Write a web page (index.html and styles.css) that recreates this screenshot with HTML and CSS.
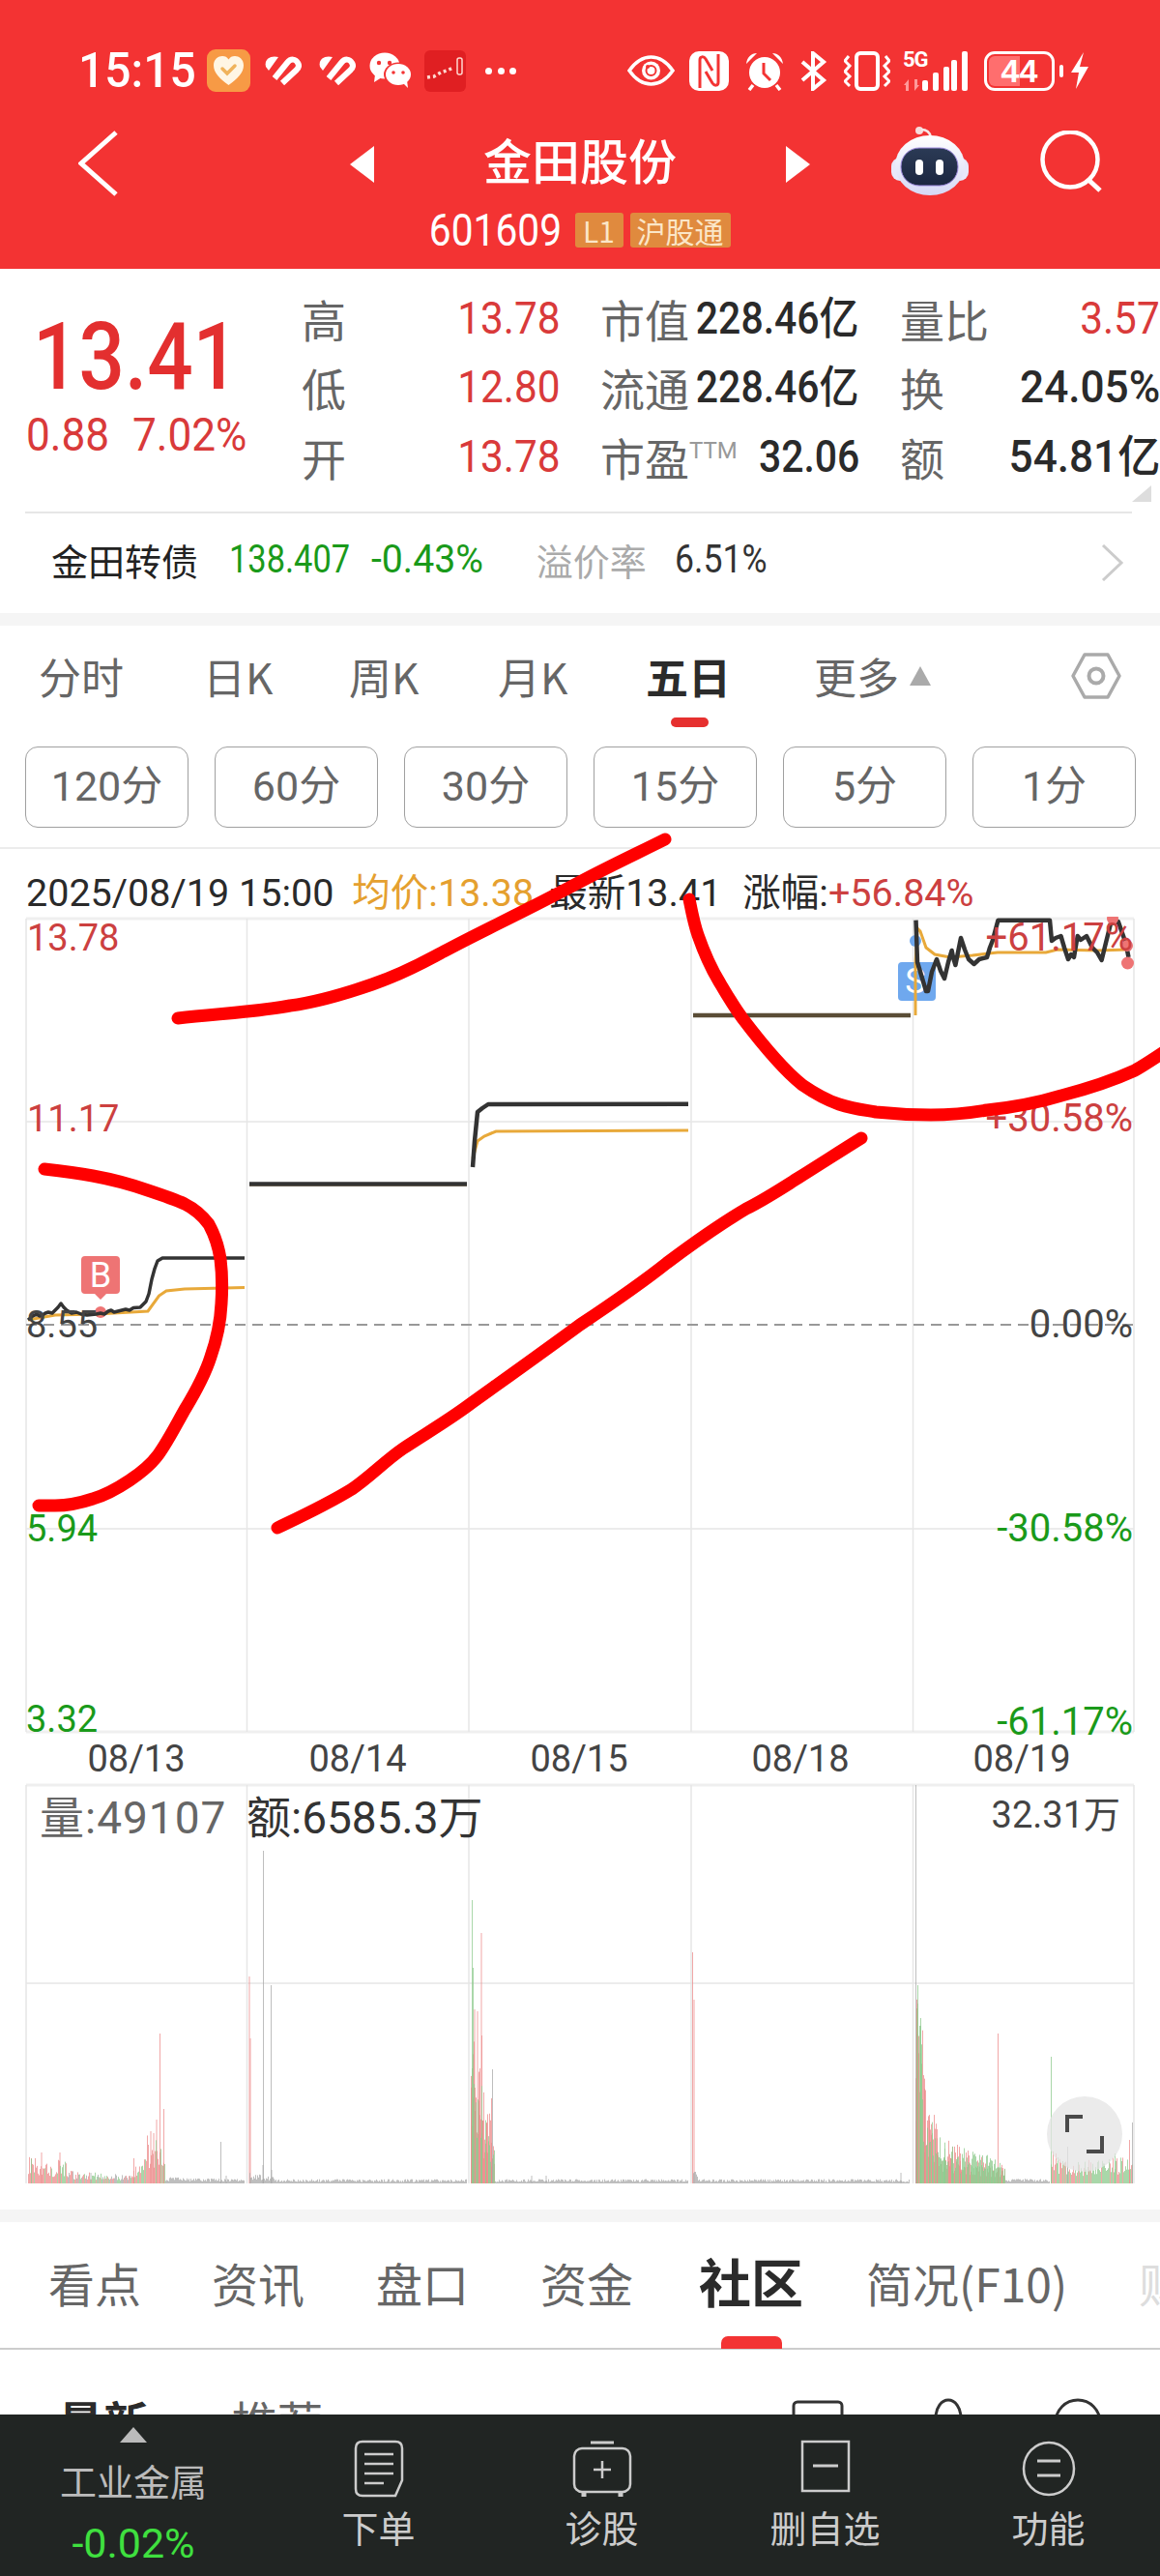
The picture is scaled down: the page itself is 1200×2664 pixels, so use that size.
FILE: index.html
```html
<!DOCTYPE html>
<html lang="zh-CN">
<head>
<meta charset="UTF-8">
<title>金田股份 601609</title>
<link rel="stylesheet" href="styles.css">
</head>
<body>
<div class="page">

  <header class="top">
    <div class="status">
      <span class="clock">15:15</span>
      <svg class="st st-app" viewBox="0 0 45 44"><rect width="45" height="44" rx="9" fill="#f79a45"/><path d="M22.5 37C13 30 7 24 7 16.500C7 10 12 7 16 7C19 7 21 8 22.500 10.500C24 8 26 7 29 7C33 7 38 10 38 16.500C38 24 32 30 22.500 37Z" fill="#fff6e4"/><path d="M16 20l5 5 8-8" fill="none" stroke="#f0b35a" stroke-width="3.500" stroke-linecap="round"/></svg>
      <svg class="st st-heart" viewBox="0 0 38 32"><path d="M1 12C-1 4 6 0 14 2L4 16Z" fill="#fff"/><path d="M10 24L23 8C27 3 32 4 34 8C36 11 35 13 33 15L18 29" fill="none" stroke="#fff" stroke-width="6"/></svg>
      <svg class="st st-heart st-heart2" viewBox="0 0 38 32"><path d="M1 12C-1 4 6 0 14 2L4 16Z" fill="#fff"/><path d="M10 24L23 8C27 3 32 4 34 8C36 11 35 13 33 15L18 29" fill="none" stroke="#fff" stroke-width="6"/></svg>
      <svg class="st st-chat" viewBox="0 0 44 38"><ellipse cx="16" cy="14" rx="15.500" ry="13.500" fill="#fff"/><path d="M6 23l-1 8 8-5Z" fill="#fff"/><circle cx="10" cy="11" r="2.200" fill="#f33333"/><circle cx="21" cy="11" r="2.200" fill="#f33333"/><ellipse cx="30" cy="23" rx="15" ry="12.500" fill="#f33333"/><ellipse cx="30" cy="23" rx="13" ry="11" fill="#fff"/><path d="M35 32l5 5-1-8Z" fill="#fff"/><circle cx="25" cy="21" r="1.800" fill="#f33333"/><circle cx="35" cy="21" r="1.800" fill="#f33333"/></svg>
      <svg class="st st-redapp" viewBox="0 0 43 43"><rect width="43" height="43" rx="6" fill="#e01f22"/><path d="M3 28l7-1 7-4 6-2 7-3" fill="none" stroke="#ffd9d0" stroke-width="3.500" stroke-dasharray="3 3"/><rect x="34" y="8" width="5" height="17" rx="2" fill="none" stroke="#ffd9d0" stroke-width="1.500"/></svg>
      <span class="st-dots"><i></i><i></i><i></i></span>
      <span class="status-gap"></span>
      <svg class="st st-eye" viewBox="0 0 49 32"><path d="M2 16C9 6 16 2 24.500 2S40 6 47 16C40 26 33 30 24.500 30S9 26 2 16Z" fill="none" stroke="#fff" stroke-width="3.500"/><circle cx="24.500" cy="16" r="9.500" fill="#fff"/><circle cx="24.500" cy="16" r="5" fill="none" stroke="#f33333" stroke-width="2"/><circle cx="21" cy="12" r="2" fill="#f33333"/></svg>
      <svg class="st st-nfc" viewBox="0 0 41 41"><rect width="41" height="41" rx="10" fill="#fff"/><path d="M11 38V9C11 5 15 5 17 8L24 20M30 3V32C30 36 26 36 24 33L17 21" fill="none" stroke="#f33333" stroke-width="3"/></svg>
      <svg class="st st-alarm" viewBox="0 0 40 41"><circle cx="20" cy="22" r="16" fill="#fff"/><path d="M1 13C2 6 6 2 12 2ZM39 13C38 6 34 2 28 2Z" fill="#fff"/><path d="M8 35l-4 5M32 35l4 5" stroke="#fff" stroke-width="3.500"/><path d="M19 12v11l7 7" fill="none" stroke="#f33333" stroke-width="3"/></svg>
      <svg class="st st-bt" viewBox="0 0 30 41"><path d="M3 11L25 30 14 39V2L25 11 3 30" fill="none" stroke="#fff" stroke-width="4"/></svg>
      <svg class="st st-vib" viewBox="0 0 48 41"><rect x="13" y="2" width="22" height="37" rx="4" fill="none" stroke="#fff" stroke-width="4"/><path d="M5 5L1 10 6 15 1 21 6 26 1 31 6 36M43 5L47 10 42 15 47 21 42 26 47 31 42 36" fill="none" stroke="#fff" stroke-width="3"/></svg>
      <span class="st-net">
        <span class="st-5g">5G</span>
        <svg class="st-arrows" viewBox="0 0 16 12"><path d="M5 0v12H2V6H0ZM11 12V0h3v6h2Z" fill="#ff9a9a"/></svg>
        <svg class="st-bars" viewBox="0 0 47 41"><rect y="30" width="6" height="11" rx="2"/><rect x="11" y="22" width="6" height="19" rx="2"/><rect x="22" y="16" width="6" height="25" rx="2"/><rect x="30" y="9" width="6" height="32" rx="2"/><rect x="41" y="0" width="6" height="41" rx="2"/></svg>
      </span>
      <span class="battery"><span class="battery-fill"></span><span class="battery-num">44</span></span>
      <span class="battery-nub"></span>
      <svg class="st st-bolt" viewBox="0 0 20 38"><path d="M14 0L1 21H9L6 38 19 15H10Z" fill="#fff"/></svg>
    </div>

    <div class="titlebar">
      <svg class="back" viewBox="0 0 42 70"><path d="M39 3L3 35 39 67" fill="none" stroke="#fff" stroke-width="5"/></svg>
      <span class="tri tri-left"></span>
      <div class="title">
        <div class="title-name">金田股份</div>
        <div class="title-code">
          <span class="code">601609</span>
          <span class="tag">L1</span>
          <span class="tag">沪股通</span>
        </div>
      </div>
      <span class="tri tri-right"></span>
      <svg class="robot" viewBox="0 0 80 72">
        <defs>
          <linearGradient id="shell" x1="0" y1="0" x2="0" y2="1"><stop offset="0" stop-color="#fff"/><stop offset="1" stop-color="#d6d8f5"/></linearGradient>
          <linearGradient id="face" x1="0" y1="0" x2="0" y2="1"><stop offset="0" stop-color="#2b3a55"/><stop offset="1" stop-color="#1c2740"/></linearGradient>
        </defs>
        <circle cx="29" cy="4" r="4" fill="#f6dcdc"/>
        <path d="M31 3C37 3 40 6 41 11" fill="none" stroke="#f8e8e8" stroke-width="2.500"/>
        <rect x="0" y="32" width="80" height="24" rx="9" fill="#e8e8fa"/>
        <ellipse cx="40" cy="40" rx="36" ry="31" fill="url(#shell)"/>
        <rect x="10" y="22" width="59" height="39" rx="19" fill="url(#face)" stroke="#9f8be0" stroke-width="1"/>
        <rect x="25" y="34" width="8" height="16" rx="4" fill="#fff"/>
        <rect x="46" y="34" width="8" height="16" rx="4" fill="#fff"/>
      </svg>
      <svg class="search" viewBox="0 0 66 66"><circle cx="32" cy="30" r="28.500" fill="none" stroke="#fff" stroke-width="4.500"/><path d="M50 50L63 62" stroke="#fff" stroke-width="5"/></svg>
    </div>
  </header>

  <section class="quote">
    <div class="quote-main">
      <div class="price">13.41</div>
      <div class="change"><span>0.88</span><span>7.02%</span></div>
    </div>
    <div class="quote-grid">
      <div class="cell"><span class="lab">高</span><span class="val red">13.78</span></div>
      <div class="cell cell-b"><span class="lab">市值</span><span class="val">228.46亿</span></div>
      <div class="cell cell-c"><span class="lab">量比</span><span class="val red">3.57</span></div>
      <div class="cell"><span class="lab">低</span><span class="val red">12.80</span></div>
      <div class="cell cell-b"><span class="lab">流通</span><span class="val">228.46亿</span></div>
      <div class="cell cell-c"><span class="lab">换</span><span class="val wide">24.05%</span></div>
      <div class="cell"><span class="lab">开</span><span class="val red">13.78</span></div>
      <div class="cell cell-b"><span class="lab">市盈<sup class="ttm">TTM</sup></span><span class="val">32.06</span></div>
      <div class="cell cell-c"><span class="lab">额</span><span class="val wide">54.81亿</span></div>
    </div>
    <span class="corner"></span>
    <div class="bond">
      <span class="bond-name">金田转债</span>
      <span class="bond-num green">138.407</span>
      <span class="bond-num green bond-pct">-0.43%</span>
      <span class="bond-lab">溢价率</span>
      <span class="bond-num bond-rate">6.51%</span>
      <svg class="bond-arrow" viewBox="0 0 24 38"><path d="M2 1L21 19 2 37" fill="none" stroke="#ccc" stroke-width="3"/></svg>
    </div>
  </section>

  <div class="band"></div>

  <nav class="periods">
    <span class="per per-1">分时</span>
    <span class="per per-2">日K</span>
    <span class="per per-3">周K</span>
    <span class="per per-4">月K</span>
    <span class="per per-5 on">五日</span>
    <span class="per per-6">更多<i class="up"></i></span>
    <svg class="hex" viewBox="0 0 52 48"><path d="M14 2H38L50 24 38 46H14L2 24Z" fill="none" stroke="#aaa" stroke-width="3.500" stroke-linejoin="round"/><circle cx="26" cy="24" r="7.500" fill="none" stroke="#aaa" stroke-width="4"/></svg>
  </nav>

  <div class="mins">
    <span class="min">120分</span>
    <span class="min">60分</span>
    <span class="min">30分</span>
    <span class="min">15分</span>
    <span class="min">5分</span>
    <span class="min">1分</span>
  </div>

  <div class="info">
    <span class="info-time">2025/08/19 15:00</span>
    <span class="info-avg">均价:13.38</span>
    <span class="info-last">最新13.41</span>
    <span class="info-rise">涨幅:<b>+56.84%</b></span>
  </div>

  <svg class="chart" viewBox="0 948 1200 1337" id="chart">
    <g class="grid">
      <path class="edge" d="M27 950H1173M27 1791H1173M27 1846H1173"/>
      <path d="M27 950V1791M255.500 950V1791M485 950V1791M715 950V1791M944.500 950V1791M1173 950V1791"/>
      <path d="M27 1160H1173M27 1581H1173"/>
      <path d="M27 1846V2258M255.500 1846V2258M485 1846V2258M715 1846V2258M944.500 1846V2258M1173 1846V2258"/>
      <path class="mid" d="M27 2051H1173"/>
    </g>
    <path class="zero" d="M27 1370H1173"/>

    <g id="vol"></g>

    <!-- B / S markers sit below the price lines -->
    <path class="mark-b" d="M88 1299H120Q124 1299 124 1303V1334Q124 1338 120 1338H110L104 1344 98 1338H88Q84 1338 84 1334V1303Q84 1299 88 1299Z"/>
    <text class="mark-t" x="104" y="1331">B</text>
    <circle class="mark-b" cx="104" cy="1357" r="6"/>
    <circle class="mark-s" cx="947" cy="973" r="6"/>
    <rect class="mark-s" x="929" y="995" width="39" height="40" rx="4"/>
    <text class="mark-t" x="947" y="1027">S</text>

    <polyline class="avg" points="29,1365 57,1360 99.500,1359 153,1356 164.500,1340 172,1335 191,1333 253,1331.500"/>
    <polyline class="px thin" points="29,1365 34,1361 38,1359 41,1361 44,1360 47,1358 50,1357 54,1358 57,1355 60,1352 63,1348 66,1352 69,1355 74,1358 79,1357 84,1359 90,1360 99.500,1359 104,1358 108,1359 112,1356 115,1355 118,1357 122,1356 126,1355 130,1354 134,1355 138,1352.500 145,1352 151,1346 154,1338 157,1323 160,1312 163,1304 168,1301 253,1301"/>
    <polyline class="avg" points="258,1225 483,1225"/>
    <polyline class="px" points="258,1224.500 483,1224.500"/>
    <polyline class="avg" points="489,1198 494,1180 501,1175 513,1170 712,1169"/>
    <polyline class="px" points="489,1207 491,1180 494,1150 499,1146 505,1142 712,1141.700"/>
    <polyline class="avg" points="717,1050.500 942,1050.500"/>
    <polyline class="px flat" points="717,1050 942,1050"/>
    <polyline class="avg" points="947,1050 947,997 949,960 952,963 958,980 967,987 983,990 1006,988 1032,985 1082,985 1094,982 1136,983 1166,982"/>
    <polyline class="px" points="947.500,951.700 949,995 958,1025 960,1025 964,1005 969,992 973,1004 977,1012 981,995 984.600,983 986,990 988.400,998 991,985 994,970 998,982 1002,992 1007.600,997 1013,992 1021,990 1024,980 1026.700,973 1032.500,951.700 1086,951.700 1088,973 1092,970 1097.500,968 1101,980 1105,992 1108,987 1111,990 1114.700,968 1118,972 1124,968 1130,980 1135,985 1139.600,993 1144,975 1149,955 1156.800,953 1161,965 1164.500,975 1167.500,990"/>
    <circle class="mark-b" cx="1151" cy="950" r="6"/>
    <circle class="mark-b" cx="1166" cy="978" r="6"/>
    <circle class="mark-b" cx="1166.500" cy="996" r="6.500"/>

    <text class="ax red" x="28" y="983">13.78</text>
    <text class="ax red" x="28" y="1170">11.17</text>
    <text class="ax gray" x="27" y="1383">8.55</text>
    <text class="ax green" x="27" y="1594">5.94</text>
    <text class="ax green" x="27" y="1791">3.32</text>
    <text class="ax pct red end" x="1172" y="983">+61.17%</text>
    <text class="ax pct red end" x="1172" y="1170">+30.58%</text>
    <text class="ax pct gray end" x="1172" y="1383">0.00%</text>
    <text class="ax pct green end" x="1172" y="1594">-30.58%</text>
    <text class="ax pct green end" x="1172" y="1794">-61.17%</text>

    <text class="ax gray mid-t" x="141" y="1832">08/13</text>
    <text class="ax gray mid-t" x="370" y="1832">08/14</text>
    <text class="ax gray mid-t" x="599" y="1832">08/15</text>
    <text class="ax gray mid-t" x="828" y="1832">08/18</text>
    <text class="ax gray mid-t" x="1057" y="1832">08/19</text>

    <text class="vt" x="41" y="1896">量:49107</text>
    <text class="vt dark" x="255" y="1896">额:6585.3万</text>
    <text class="ax gray end" x="1159" y="1890">32.31万</text>

    <circle class="fs-bg" cx="1122" cy="2207" r="39"/>
    <path class="fs" d="M1104 2205V2189H1120M1140 2209V2225H1124"/>
  </svg>

  <div class="band band-2"></div>

  <nav class="subnav">
    <span class="sub sub-1">看点</span>
    <span class="sub sub-2">资讯</span>
    <span class="sub sub-3">盘口</span>
    <span class="sub sub-4">资金</span>
    <span class="sub sub-5 on">社区</span>
    <span class="sub sub-6">简况(F10)</span>
    <span class="sub sub-7">财</span>
  </nav>

  <div class="feed">
    <span class="feed-on">最新</span>
    <span class="feed-off">推荐</span>
    <svg class="feed-ic feed-ic-1" viewBox="0 0 54 40"><rect x="2" y="2" width="50" height="38" rx="4" fill="none" stroke="#333" stroke-width="3"/></svg>
    <svg class="feed-ic feed-ic-2" viewBox="0 0 30 40"><ellipse cx="15" cy="20" rx="13" ry="18" fill="none" stroke="#333" stroke-width="3"/></svg>
    <svg class="feed-ic feed-ic-3" viewBox="0 0 50 40"><circle cx="25" cy="25" r="23" fill="none" stroke="#333" stroke-width="3"/></svg>
  </div>

  <footer class="foot">
    <div class="foot-idx">
      <i class="foot-tri"></i>
      <span class="foot-name">工业金属</span>
      <span class="foot-pct">-0.02%</span>
    </div>
    <div class="foot-btn">
      <svg viewBox="0 0 52 60"><path d="M9 2H43Q50 2 50 9V42L43 58H9Q2 58 2 51V9Q2 2 9 2Z" fill="none" stroke="#ccc" stroke-width="2.500"/><path d="M11 15H41M11 25H41M11 35H41M11 45H31" stroke="#ccc" stroke-width="2.500"/></svg>
      <span>下单</span>
    </div>
    <div class="foot-btn">
      <svg viewBox="0 0 62 60"><path d="M19 3H43" stroke="#ccc" stroke-width="3"/><rect x="2" y="9" width="58" height="45" rx="8" fill="none" stroke="#ccc" stroke-width="2.500"/><path d="M31 22V40M22 31H40" stroke="#ccc" stroke-width="2.500"/><path d="M12 55V59M50 55V59" stroke="#ccc" stroke-width="5"/></svg>
      <span>诊股</span>
    </div>
    <div class="foot-btn">
      <svg viewBox="0 0 52 60"><rect x="2" y="2" width="48" height="51" fill="none" stroke="#ccc" stroke-width="2.500"/><path d="M13 27H39" stroke="#ccc" stroke-width="3"/></svg>
      <span>删自选</span>
    </div>
    <div class="foot-btn">
      <svg viewBox="0 0 56 60"><ellipse cx="28" cy="30" rx="26" ry="27" fill="none" stroke="#ccc" stroke-width="2.500"/><path d="M16 22H40M16 37H40" stroke="#ccc" stroke-width="3"/></svg>
      <span>功能</span>
    </div>
  </footer>

  <!-- hand drawn marks on top of the screenshot -->
  <svg class="ink" viewBox="0 0 1200 2664">
    <path d="M184 1053C230 1048 268 1046 300 1040C330 1036 356 1028 385 1018C420 1006 440 994 459 984C500 962 540 944 600 912C630 896 660 882 688 868"/>
    <path d="M713 930C716 945 718 956 722 967C730 990 737 1004 745 1017C752 1029 760 1042 768 1053C790 1082 810 1106 830 1122C846 1133 856 1138 868 1142C884 1147 895 1148 906 1150C925 1152 945 1153 963 1153C985 1153 1003 1151 1021 1148C1050 1145 1075 1140 1098 1133C1125 1126 1150 1118 1174 1107C1183 1102 1192 1096 1204 1088"/>
    <path d="M46 1209C64 1211 80 1213 96 1216C118 1220 136 1225 153 1231C168 1236 180 1240 191 1245C203 1251 210 1258 216 1266C222 1277 226 1289 228 1302C230 1318 230 1333 229 1348C228 1368 224 1386 218 1403C212 1422 202 1440 191 1458C182 1474 174 1490 164 1504C156 1515 146 1523 134 1531C122 1539 110 1546 96 1550C84 1554 70 1557 57 1557L40 1557"/>
    <path d="M287 1580C312 1568 338 1556 364 1540C382 1528 398 1511 417 1498C438 1484 462 1470 485 1453C524 1425 562 1398 600 1370C630 1350 660 1330 690 1306C718 1285 745 1266 772 1250C792 1240 810 1228 826 1218C850 1203 870 1190 891 1177"/>
  </svg>
</div>
<script src="script.js"></script>
</body>
</html>
```
FILE: styles.css
```css
* { box-sizing: border-box; }
html, body { margin: 0; padding: 0; background: #fff; }
body { font-family: "Noto Sans CJK SC", Roboto, sans-serif; color: #222; }
.page { position: relative; width: 1200px; height: 2664px; overflow: hidden; }
.red { color: #d93a3a; fill: #cc4040; }
.green { color: #1a9a1a; fill: #1a9a1a; }
.gray { fill: #444; }

/* header */
.top { height: 278px; padding-top: 51px; background: #f33333; color: #fff; }
.status { display: flex; align-items: center; height: 44px; padding-left: 81px; }
.clock { width: 133px; flex: none; font: 500 50px/44px Roboto, sans-serif; transform: scaleX(0.96); transform-origin: left center; }
.st { display: block; flex: none; }
.st-app { width: 45px; height: 44px; }
.st-heart { width: 38px; height: 32px; margin-left: 15px; }
.st-heart2 { margin-left: 18px; }
.st-chat { width: 44px; height: 38px; margin-left: 14px; }
.st-redapp { width: 43px; height: 43px; margin-left: 13px; }
.st-dots { display: flex; gap: 5.500px; margin-left: 20px; }
.st-dots i { width: 7px; height: 7px; border-radius: 50%; background: #fff; }
.status-gap { width: 115px; flex: none; }
.st-eye { width: 49px; height: 32px; }
.st-nfc { width: 41px; height: 41px; margin-left: 15px; }
.st-alarm { width: 40px; height: 41px; margin-left: 17px; }
.st-bt { width: 30px; height: 41px; margin-left: 16px; }
.st-vib { width: 48px; height: 41px; margin-left: 16px; }
.st-net { position: relative; width: 67px; height: 41px; margin-left: 13px; flex: none; }
.st-5g { position: absolute; left: 0; top: -3px; font: 700 22px/24px Roboto, sans-serif; letter-spacing: -1px; }
.st-arrows { position: absolute; left: 1px; top: 29px; width: 16px; height: 12px; }
.st-bars { position: absolute; left: 20px; top: 0; width: 47px; height: 41px; fill: #fff; }
.battery { position: relative; width: 73px; height: 41px; margin-left: 17px; border: 3.500px solid #fff; border-radius: 11px; flex: none; overflow: hidden; }
.battery-fill { position: absolute; left: 2px; top: 2px; bottom: 2px; width: 32px; background: #ff6e6e; border-radius: 6px 0 0 6px; }
.battery-num { position: absolute; left: 0; right: 0; top: 0; text-align: center; font: 700 34px/34px "Liberation Sans", sans-serif; color: #fff; }
.battery-nub { width: 4px; height: 13px; margin-left: 5px; background: #fff; border-radius: 2px; flex: none; }
.st-bolt { width: 20px; height: 38px; margin-left: 7px; }

.titlebar { position: relative; height: 115px; margin-top: 68px; }
.back { position: absolute; left: 81px; top: 0; width: 42px; height: 70px; }
.tri { position: absolute; top: 17px; width: 0; height: 0; border-top: 19px solid transparent; border-bottom: 19px solid transparent; }
.tri-left { left: 362px; border-right: 25px solid #fff; }
.tri-right { left: 813px; border-left: 25px solid #fff; }
.title { width: 1200px; margin-top: -29px; text-align: center; }
.title-name { font-size: 50px; line-height: 60px; font-weight: 500; }
.title-code { display: flex; align-items: center; justify-content: center; gap: 7px; margin-top: 24px; }
.code { margin-left: -18px; margin-right: 6px; font: 400 46px/40px Roboto, sans-serif; transform: scaleX(0.885); transform-origin: right center; }
.tag { min-width: 50px; height: 36px; padding: 0 7px; background: #e08a3e; color: #fbe6c8; font-size: 30px; line-height: 36px; text-align: center; border-radius: 3px; }
.robot { position: absolute; left: 922px; top: -3px; width: 80px; height: 72px; }
.search { position: absolute; left: 1075px; top: 1px; width: 66px; height: 66px; }

/* quote */
.quote { position: relative; height: 356px; }
.quote-main { position: absolute; left: 27px; top: 37px; width: 285px; }
.price { padding-left: 7px; font: 500 96px/108px Roboto, sans-serif; color: #e32f2f; transform: scaleX(0.87); transform-origin: 7px center; }
.change { display: flex; gap: 16px; margin-top: 2px; font: 400 48px/50px Roboto, sans-serif; color: #d93a3a; }
.change span { transform: scaleX(0.92); transform-origin: left center; }
.quote-grid { position: absolute; left: 312px; top: 15px; width: 888px; display: grid; grid-template-columns: 268px 309px 311px; grid-auto-rows: 71.500px; }
.cell { display: flex; justify-content: space-between; align-items: center; white-space: nowrap; }
.cell-b { padding-left: 41px; }
.cell-c { padding-left: 42px; }
.lab { font-size: 46px; color: #666; }
.val { margin-left: -40px; font: 500 46px/60px Roboto, "Noto Sans CJK SC", sans-serif; color: #2a2a2a; transform: scaleX(0.89); transform-origin: right center; }
.val.wide { transform: scaleX(0.96); }
.val.red { font-weight: 400; color: #d93a3a; transform: scaleX(0.92); }
.ttm { font: 400 24px/24px Roboto, sans-serif; color: #999; vertical-align: 18px; }
.corner { position: absolute; right: 9px; top: 224px; width: 0; height: 0; border-left: 20px solid transparent; border-bottom: 17px solid #ddd; }
.bond { position: absolute; left: 26px; right: 29px; top: 251px; height: 105px; border-top: 2px solid #e6e6e6; display: flex; align-items: center; padding: 0 0 8px 27px; white-space: nowrap; }
.bond-name { width: 184px; flex: none; font-size: 38px; color: #222; }
.bond-num { font: 400 40px/50px Roboto, sans-serif; transform: scaleX(0.86); transform-origin: left center; }
.bond-pct { margin-left: 2px; transform: scaleX(0.98); }
.bond-lab { margin-left: 52px; font-size: 38px; color: #aaa; }
.bond-rate { margin-left: 29px; color: #333; transform: scaleX(0.89); }
.bond-arrow { position: absolute; left: 1113px; top: 32px; width: 24px; height: 38px; }

.band { height: 13px; background: #f5f5f5; }

/* period tabs */
.periods { position: relative; height: 107px; }
.per { position: absolute; top: 21px; font-size: 44px; line-height: 62px; color: #666; white-space: nowrap; }
.per-1 { left: 40px; }
.per-2 { left: 210px; }
.per-3 { left: 361px; }
.per-4 { left: 515px; }
.per-5 { left: 668px; }
.per-6 { left: 842px; }
.per.on { color: #2b2b2b; font-weight: 700; }
.per.on::after { content: ""; position: absolute; left: 26px; top: 74px; width: 39px; height: 10px; border-radius: 5px; background: #e6302f; }
.up { display: inline-block; width: 0; height: 0; margin-left: 11px; vertical-align: 9px; border-left: 11px solid transparent; border-right: 11px solid transparent; border-bottom: 20px solid #aaa; }
.hex { position: absolute; left: 1108px; top: 28px; width: 52px; height: 48px; }

.mins { display: flex; gap: 27px; padding: 18px 24px 20px 26px; border-bottom: 2px solid #ececec; }
.min { width: 169px; height: 84px; border: 1.500px solid #a0a0a0; border-radius: 13px; font: 400 43px/80px Roboto, "Noto Sans CJK SC", sans-serif; color: #666; text-align: center; }

.info { display: flex; height: 70px; padding: 16px 0 0 27px; font: 400 39.500px/60px Roboto, "Noto Sans CJK SC", sans-serif; color: #2a2a2a; white-space: nowrap; }
.info-avg { margin-left: 19px; color: #e5a02f; }
.info-last { margin-left: 16px; }
.info-rise { margin-left: 22px; }
.info-rise b { font-weight: 400; color: #cc4040; }

/* chart */
.chart { display: block; width: 1200px; height: 1337px; }
.grid path { fill: none; stroke: #e6e6e6; stroke-width: 1.500; }
.grid .edge { stroke: #efefef; stroke-width: 3; }
.zero { fill: none; stroke: #999; stroke-width: 2; stroke-dasharray: 11 7; }
.avg { fill: none; stroke: #e8a93a; stroke-width: 3; }
.px { fill: none; stroke: #333; stroke-width: 4.500; stroke-linejoin: round; }
.px.thin { stroke-width: 3.500; }
.flat { stroke: #5a4d36; }
.mark-b { fill: #ee7474; }
.mark-s { fill: #6fa8ee; }
.mark-t { fill: #fff; font: 400 36px Roboto, sans-serif; text-anchor: middle; }
.ax { font: 400 38px Roboto, "Noto Sans CJK SC", sans-serif; }
.pct { font-size: 40px; }
.end { text-anchor: end; }
.mid-t { text-anchor: middle; }
.vt { font: 400 46px Roboto, "Noto Sans CJK SC", sans-serif; fill: #666; letter-spacing: 1px; }
.vt.dark { fill: #333; letter-spacing: 0; }
.fs-bg { fill: #e4e4e4; fill-opacity: 0.75; }
.fs { fill: none; stroke: #4a4a4a; stroke-width: 4; }

/* lower tabs */
.subnav { position: relative; height: 132px; border-bottom: 2px solid #ccc; }
.sub { position: absolute; top: 27px; font-size: 48px; line-height: 70px; color: #666; white-space: nowrap; }
.sub-1 { left: 50px; }
.sub-2 { left: 219px; }
.sub-3 { left: 389px; }
.sub-4 { left: 559px; }
.sub-5 { left: 723px; top: 26px; font-size: 54px; font-weight: 700; color: #2b2b2b; }
.sub-5::after { content: ""; position: absolute; left: 23px; top: 92px; width: 63px; height: 13px; border-radius: 7px 7px 0 0; background: #f33333; }
.sub-6 { left: 896px; }
.sub-7 { left: 1178px; color: #ddd; }

.feed { position: relative; height: 67px; overflow: hidden; }
.feed-on { position: absolute; left: 60px; top: 43px; font-size: 47px; line-height: 60px; font-weight: 700; color: #2b2b2b; }
.feed-off { position: absolute; left: 240px; top: 43px; font-size: 47px; line-height: 60px; color: #666; }
.feed-ic { position: absolute; top: 52px; }
.feed-ic-1 { left: 819px; width: 54px; height: 40px; }
.feed-ic-2 { left: 966px; top: 50px; width: 30px; height: 40px; }
.feed-ic-3 { left: 1090px; top: 50px; width: 50px; height: 40px; }

/* footer */
.foot { display: grid; grid-template-columns: 276px repeat(4, 231px); height: 167px; background: #212523; }
.foot-idx { position: relative; text-align: center; }
.foot-tri { display: block; width: 0; height: 0; margin: 13px auto 0; border-left: 14.500px solid transparent; border-right: 14.500px solid transparent; border-bottom: 16px solid #bbb; }
.foot-name { display: block; margin-top: 12px; font-size: 38px; line-height: 54px; color: #bbb; }
.foot-pct { display: block; margin-top: 13px; font: 400 43px/50px Roboto, sans-serif; color: #3fe03f; }
.foot-btn { text-align: center; padding-top: 26px; color: #ccc; font-size: 38px; line-height: 56px; }
.foot-btn svg { display: block; height: 60px; margin: 0 auto 2px; }

.ink { position: absolute; left: 0; top: 0; width: 1200px; height: 2664px; pointer-events: none; }
.ink path { fill: none; stroke: #ff0000; stroke-width: 13; stroke-linecap: round; stroke-linejoin: round; }
```
FILE: script.js
```js
// volume bars, far too many to write by hand
var vol = document.getElementById('vol');
var BASE = 2258;
var RED = '#ec8a8a', GREEN = '#8cc98c', GREY = '#a8a8a8';
var seed = 17;

function rnd() {
  seed = (seed * 16807) % 2147483647;
  return seed / 2147483647;
}

var d = {};
function bar(x, top, color) {
  d[color] = (d[color] || '') + 'M' + x + ' ' + BASE + 'V' + top;
}

// a run of bars, height falls from h0 to h1 across the run
function run(x0, x1, h0, h1, colors) {
  for (var x = x0; x < x1; x++) {
    var t = (x - x0) / (x1 - x0);
    var h = (h0 + (h1 - h0) * t) * (0.35 + rnd() * 0.75);
    bar(x + 0.5, BASE - h, colors[Math.floor(rnd() * colors.length)]);
  }
}

// 08/13
run(29, 60, 28, 16, [RED, GREEN, RED]);
run(60, 70, 26, 18, [RED, GREEN]);
run(70, 138, 12, 8, [RED, GREEN, GREY]);
run(138, 151, 16, 24, [RED, GREEN]);
run(151, 171, 46, 36, [RED, RED, GREEN]);
run(171, 253, 6, 4, [GREY]);
// 08/14
run(258, 284, 10, 6, [GREY]);
run(284, 483, 4, 4, [GREY]);
// 08/15
run(487, 512, 150, 45, [RED, RED, GREEN]);
run(487, 512, 110, 30, [RED, GREEN]);
run(512, 712, 4, 4, [GREY]);
// 08/18
run(717, 722, 15, 6, [GREY]);
run(722, 941, 4, 4, [GREY]);
// 08/19
run(947, 955, 210, 170, [RED, GREEN]);
run(947, 955, 180, 150, [GREEN, RED]);
run(955, 970, 110, 50, [RED, GREEN]);
run(955, 970, 70, 40, [GREEN, RED]);
run(970, 1040, 45, 20, [RED, GREEN]);
run(970, 1040, 30, 14, [GREEN, RED]);
run(1040, 1086, 5, 4, [GREY]);
run(1087, 1110, 32, 18, [RED, GREEN]);
run(1110, 1172, 20, 28, [RED, GREEN, GREEN]);

[
  [43, 2226, RED], [62, 2226, RED], [32.5, 2232, RED], [94, 2247, GREY], [138.5, 2232, RED],
  [156, 2204, RED], [159, 2206, RED], [162, 2192, RED], [165.5, 2103, RED], [169.5, 2181, RED],
  [228.5, 2215, GREY], [234, 2250, GREY],
  [258, 2044, RED], [259, 2108, RED], [272.5, 1914, GREY], [272, 2239, GREY], [280.5, 2053, GREY], [281, 2244, GREY],
  [488.5, 1965, GREEN], [489.5, 2035, GREEN], [491, 2078, RED], [494, 2080, RED], [498, 1999, RED],
  [498.5, 2105, RED], [503.5, 2195, RED], [508.5, 2170, RED], [509.5, 2140, GREY],
  [550, 2250, GREY], [565, 2250, GREY],
  [716.5, 2019, RED], [718, 2068, RED], [932, 2247, GREY],
  [947.5, 1846, GREY], [949.5, 2053, GREEN], [948.5, 2077, '#c0a478'], [952.5, 2087, GREEN], [956.5, 2160, RED],
  [961.5, 2193, RED], [969.5, 2202, RED], [977.5, 2222, GREEN], [985.5, 2220, RED], [993.5, 2227, RED],
  [1032.5, 2103, RED], [1087.5, 2127, GREEN], [1104.5, 2220, GREY], [1153.5, 2227, GREEN],
  [1168.5, 2213, RED], [1171.5, 2195, GREY]
].forEach(function (s) { bar(s[0], s[1], s[2]); });

var NS = 'http://www.w3.org/2000/svg';
Object.keys(d).forEach(function (color) {
  var p = document.createElementNS(NS, 'path');
  p.setAttribute('d', d[color]);
  p.setAttribute('fill', 'none');
  p.setAttribute('stroke', color);
  p.setAttribute('stroke-width', '1');
  p.setAttribute('stroke-opacity', '0.75');
  vol.appendChild(p);
});
```
